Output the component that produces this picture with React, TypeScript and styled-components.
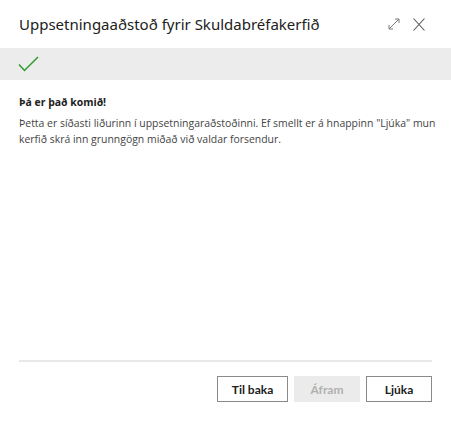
import React from "react";
import styled, { createGlobalStyle } from "styled-components";

const Global = createGlobalStyle`
  html, body { margin: 0; padding: 0; background: #ffffff; }
  body { font-family: "Open Sans", "Noto Sans", sans-serif; }
`;

const Dialog = styled.div`
  width: 451px;
  height: 421px;
  box-sizing: border-box;
  display: flex;
  flex-direction: column;
  background: #fff;
`;

const Header = styled.div`
  height: 48px;
  display: flex;
  align-items: center;
  padding: 0 26px 0 19px;
  box-sizing: border-box;
`;

const Title = styled.h1`
  flex: 1;
  margin: 0;
  font-family: "Noto Sans", sans-serif;
  font-weight: 400;
  font-size: 15px;
  color: #212121;
  white-space: nowrap;
`;

const IconButton = styled.button<{ $gap: number }>`
  border: none;
  background: none;
  padding: 0;
  margin-left: ${(p) => p.$gap}px;
  display: flex;
  align-items: center;
  justify-content: center;
  width: 12px;
  height: 13px;
`;

const Band = styled.div`
  height: 32px;
  background: #ececec;
  display: flex;
  align-items: center;
  padding: 0 18px;
`;

const Content = styled.div`
  flex: 1;
  padding: 14px 12px 0 19px;
  font-family: "Open Sans", sans-serif;
  font-size: 10.45px;
  color: #333;
`;

const Heading = styled.div`
  font-weight: 700;
  color: #212121;
  line-height: 16px;
  margin-bottom: 5px;
`;

const Para = styled.p`
  margin: 0;
  line-height: 16px;
  color: #444;
`;

const Footer = styled.div`
  padding: 0 19px;
`;

const Divider = styled.div`
  height: 2px;
  background: #e8e8e8;
`;

const Buttons = styled.div`
  display: flex;
  justify-content: flex-end;
  gap: 6px;
  padding: 14px 0 19px;
`;

const Btn = styled.button<{ $w: number; $disabled?: boolean }>`
  width: ${(p) => p.$w}px;
  height: 26px;
  box-sizing: border-box;
  border: 1px solid ${(p) => (p.$disabled ? "#ebebeb" : "#8a8a8a")};
  background: ${(p) => (p.$disabled ? "#ebebeb" : "#fff")};
  color: ${(p) => (p.$disabled ? "#b0b0b0" : "#212121")};
  font-family: "Lato", sans-serif;
  font-weight: 700;
  font-size: 12px;
  padding: 0;
  cursor: pointer;
`;

export default function App() {
  return (
    <>
      <Global />
      <Dialog>
        <Header>
          <Title>Uppsetningaaðstoð fyrir Skuldabréfakerfið</Title>
          <IconButton $gap={0} aria-label="expand">
            <svg width="12" height="12" viewBox="0 0 12 12" fill="none" stroke="#7a7a7a" strokeWidth="1">
              <path d="M1 11 L11 1 M7 1 H11 V5 M1 7 V11 H5" />
            </svg>
          </IconButton>
          <IconButton $gap={13} aria-label="close">
            <svg width="12" height="13" viewBox="0 0 12 13" fill="none" stroke="#555" strokeWidth="1.1">
              <path d="M0.5 0.5 L11.5 12.5 M11.5 0.5 L0.5 12.5" />
            </svg>
          </IconButton>
        </Header>
        <Band>
          <svg width="21" height="16" viewBox="0 0 21 16" fill="none" stroke="#2f9a2f" strokeWidth="1.5">
            <path d="M1 8.5 L6.5 14.5 L20 1" />
          </svg>
        </Band>
        <Content>
          <Heading>Þá er það komið!</Heading>
          <Para>
            Þetta er síðasti liðurinn í uppsetningaraðstoðinni. Ef smellt er á hnappinn "Ljúka" mun
            kerfið skrá inn grunngögn miðað við valdar forsendur.
          </Para>
        </Content>
        <Footer>
          <Divider />
          <Buttons>
            <Btn $w={71}>Til baka</Btn>
            <Btn $w={66} $disabled>Áfram</Btn>
            <Btn $w={66}>Ljúka</Btn>
          </Buttons>
        </Footer>
      </Dialog>
    </>
  );
}
